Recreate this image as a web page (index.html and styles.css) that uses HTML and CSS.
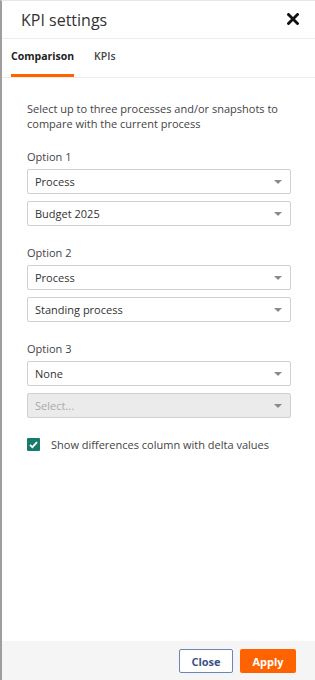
FILE: index.html
```html
<!DOCTYPE html>
<html lang="en">
<head>
  <meta charset="UTF-8">
  <title>KPI settings</title>
  <meta name="viewport" content="width=device-width, initial-scale=1.0">
  <link rel="stylesheet" href="styles.css">
</head>
<body>

  <div class="panel">
    <div class="cabecera">
      <h1>KPI settings</h1>
      <svg class="cerrar" width="12" height="12" viewBox="0 0 12 12"><path d="M1.5 1.5 L10.5 10.5 M10.5 1.5 L1.5 10.5" stroke="#111" stroke-width="2.8" stroke-linecap="square"/></svg>
    </div>

    <div class="pestanas">
      <div class="pestana activa">Comparison</div>
      <div class="pestana">KPIs</div>
    </div>

    <div class="contenido">
      <p class="intro">Select up to three processes and/or snapshots to compare with the current process</p>

      <div class="grupo">
        <label>Option 1</label>
        <div class="selector"><span>Process</span><i class="flecha"></i></div>
        <div class="selector"><span>Budget 2025</span><i class="flecha"></i></div>
      </div>

      <div class="grupo">
        <label>Option 2</label>
        <div class="selector"><span>Process</span><i class="flecha"></i></div>
        <div class="selector"><span>Standing process</span><i class="flecha"></i></div>
      </div>

      <div class="grupo">
        <label>Option 3</label>
        <div class="selector"><span>None</span><i class="flecha"></i></div>
        <div class="selector desactivado"><span>Select...</span><i class="flecha"></i></div>
      </div>

      <div class="casilla">
        <span class="check">
          <svg width="13" height="13" viewBox="0 0 13 13"><path d="M3 6.8 L5.4 9.1 L10 4.2" fill="none" stroke="#fff" stroke-width="1.8"/></svg>
        </span>
        <span>Show differences column with delta values</span>
      </div>
    </div>

    <div class="pie">
      <button class="btn-cerrar">Close</button>
      <button class="btn-aplicar">Apply</button>
    </div>
  </div>

</body>
</html>
```

FILE: styles.css
```css
* {
  margin: 0;
  padding: 0;
  box-sizing: border-box;
}

html, body {
  height: 100%;
  font-family: 'Open Sans', sans-serif;
  color: #333;
  background: #fff;
}

.panel {
  display: flex;
  flex-direction: column;
  height: 680px;
  border-left: 2px solid #9e9e9e;
  border-top: 1px solid #e6e6e6;
}

.cabecera {
  display: flex;
  align-items: center;
  justify-content: space-between;
  height: 38px;
  padding: 0 16px 0 19px;
  border-bottom: 1px solid #ececec;
}

.cabecera h1 {
  font-size: 16px;
  font-weight: 400;
  color: #333;
}

.cerrar {
  display: block;
  margin-top: -1px;
}

.pestanas {
  display: flex;
  gap: 20px;
  height: 39px;
  padding: 0 0 0 9px;
  border-bottom: 1px solid #ececec;
}

.pestana {
  display: flex;
  align-items: center;
  font-size: 10.5px;
  font-weight: 600;
  color: #444;
  border-bottom: 3px solid transparent;
  padding-bottom: 1px;
}

.pestana.activa {
  color: #222;
  font-weight: 700;
  border-bottom-color: #ff6200;
}

.contenido {
  flex: 1;
  padding: 23px 24px 0 25px;
}

.intro {
  font-size: 11px;
  line-height: 15px;
  color: #444;
  margin-bottom: 19px;
}

.grupo {
  display: flex;
  flex-direction: column;
  gap: 7px;
  margin-bottom: 20px;
}

.grupo label {
  font-size: 11px;
  line-height: 13px;
  color: #444;
  margin-bottom: -1px;
}

.selector {
  display: flex;
  align-items: center;
  justify-content: space-between;
  height: 25px;
  padding: 0 8px 0 7px;
  border: 1px solid #d0d0d0;
  border-radius: 2px;
  font-size: 11px;
  color: #333;
  background: #fff;
}

.selector.desactivado {
  background: #ebebeb;
  color: #aaa;
}

.flecha {
  width: 0;
  height: 0;
  border-left: 4px solid transparent;
  border-right: 4px solid transparent;
  border-top: 4px solid #8a8a8a;
}

.casilla {
  display: flex;
  align-items: center;
  gap: 11px;
  font-size: 11px;
  color: #444;
  margin-top: -1px;
}

.check {
  display: flex;
  width: 13px;
  height: 13px;
  background: #187a68;
  border-radius: 1px;
}

.pie {
  display: flex;
  justify-content: flex-end;
  gap: 7px;
  height: 39px;
  padding: 8px 19px 0 0;
  background: #f5f5f5;
}

.pie button {
  height: 24px;
  font-family: 'Open Sans', sans-serif;
  font-size: 11px;
  font-weight: 700;
  border-radius: 2px;
  cursor: pointer;
}

.btn-cerrar {
  width: 54px;
  background: #fff;
  color: #3a5384;
  border: 1px solid #6a85b8;
}

.btn-aplicar {
  width: 56px;
  background: #ff6200;
  color: #fff;
  border: none;
}
```
